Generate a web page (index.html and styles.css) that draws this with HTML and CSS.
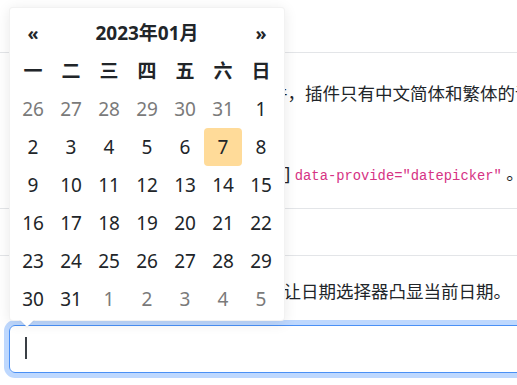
FILE: index.html
```html
<!DOCTYPE html>
<html lang="zh-CN">
<head>
    <meta charset="UTF-8">
    <title>日期选择器</title>
    <link rel="stylesheet" href="styles.css">
</head>
<body>
    <div class="page">
        <div class="bar"></div>

        <p class="line line-lang">设置语言需要引入对应的语言文件，插件只有中文简体和繁体的语言包，其他语言需要自行添加。</p>
        <p class="line line-code">可以在输入框元素上直接添加属性] <code>data-provide="datepicker"</code> 。</p>

        <div class="rule rule-short"></div>
        <div class="rule rule-tall"></div>

        <p class="line line-today">设置今天高亮属性为真值后便可以让日期选择器凸显当前日期。</p>

        <div class="field">
            <span class="caret"></span>
        </div>
    </div>

    <div class="datepicker">
        <div class="dp-grid">
            <div class="dp-nav">«</div>
            <div class="dp-switch">2023年01月</div>
            <div class="dp-nav">»</div>

            <div class="dp-dow">一</div>
            <div class="dp-dow">二</div>
            <div class="dp-dow">三</div>
            <div class="dp-dow">四</div>
            <div class="dp-dow">五</div>
            <div class="dp-dow">六</div>
            <div class="dp-dow">日</div>

            <div class="day old">26</div>
            <div class="day old">27</div>
            <div class="day old">28</div>
            <div class="day old">29</div>
            <div class="day old">30</div>
            <div class="day old">31</div>
            <div class="day">1</div>

            <div class="day">2</div>
            <div class="day">3</div>
            <div class="day">4</div>
            <div class="day">5</div>
            <div class="day">6</div>
            <div class="day today">7</div>
            <div class="day">8</div>

            <div class="day">9</div>
            <div class="day">10</div>
            <div class="day">11</div>
            <div class="day">12</div>
            <div class="day">13</div>
            <div class="day">14</div>
            <div class="day">15</div>

            <div class="day">16</div>
            <div class="day">17</div>
            <div class="day">18</div>
            <div class="day">19</div>
            <div class="day">20</div>
            <div class="day">21</div>
            <div class="day">22</div>

            <div class="day">23</div>
            <div class="day">24</div>
            <div class="day">25</div>
            <div class="day">26</div>
            <div class="day">27</div>
            <div class="day">28</div>
            <div class="day">29</div>

            <div class="day">30</div>
            <div class="day">31</div>
            <div class="day new">1</div>
            <div class="day new">2</div>
            <div class="day new">3</div>
            <div class="day new">4</div>
            <div class="day new">5</div>
        </div>
    </div>
</body>
</html>
```

FILE: styles.css
```css
* {
    margin: 0;
    padding: 0;
    box-sizing: border-box;
}

body {
    font-family: "Noto Sans", "Noto Sans CJK SC", sans-serif;
    color: #212529;
    background: #fff;
    width: 517px;
    height: 385px;
    overflow: hidden;
    position: relative;
}

.page {
    white-space: nowrap;
    overflow: hidden;
    height: 385px;
}

.bar {
    height: 53px;
    border-bottom: 1px solid #e3e5e8;
}

.line {
    font-size: 17.5px;
    line-height: 26px;
}

.line-lang {
    margin-top: 27px;
    padding-left: 25px;
}

.line-code {
    margin-top: 54px;
    padding-left: 22px;
}

code {
    font-family: "Liberation Mono", monospace;
    font-size: 13.8px;
    color: #d63384;
}

.rule {
    border-bottom: 1px solid #e3e5e8;
}

.rule-short {
    height: 19px;
}

.rule-tall {
    height: 47px;
}

.line-today {
    margin-top: 22px;
    padding-left: 21px;
}

.field {
    margin: 21px 0 0 9px;
    width: 620px;
    height: 48px;
    border: 1px solid #4a90f5;
    border-radius: 6px;
    box-shadow: 0 0 0 5px rgba(13, 110, 253, 0.27);
    padding: 11px 0 0 15px;
}

.caret {
    display: block;
    width: 2px;
    height: 22px;
    background: #3a3f45;
}

/* dropdown */
.datepicker {
    position: absolute;
    top: 7px;
    left: 9px;
    width: 276px;
    height: 314px;
    padding: 6px 4px 2px;
    background: #fff;
    border: 1px solid rgba(0, 0, 0, 0.05);
    border-radius: 4px;
    box-shadow: 0 2px 14px rgba(0, 0, 0, 0.09);
}

.datepicker::before {
    content: '';
    position: absolute;
    left: 9px;
    bottom: -8px;
    border-left: 8px solid transparent;
    border-right: 8px solid transparent;
    border-top: 8px solid rgba(0, 0, 0, 0.06);
}

.datepicker::after {
    content: '';
    position: absolute;
    left: 10px;
    bottom: -7px;
    border-left: 7px solid transparent;
    border-right: 7px solid transparent;
    border-top: 7px solid #fff;
}

.dp-grid {
    display: grid;
    grid-template-columns: repeat(7, 38px);
    grid-auto-rows: 38px;
    font-size: 19px;
    line-height: 38px;
    text-align: center;
}

.dp-nav {
    font-weight: 700;
    font-size: 18px;
}

.dp-switch {
    grid-column: span 5;
    font-weight: 700;
}

.dp-dow {
    font-weight: 700;
}

.day.old,
.day.new {
    color: #7a7a7a;
}

.day.today {
    background: #ffdb99;
    border-radius: 4px;
}
```
